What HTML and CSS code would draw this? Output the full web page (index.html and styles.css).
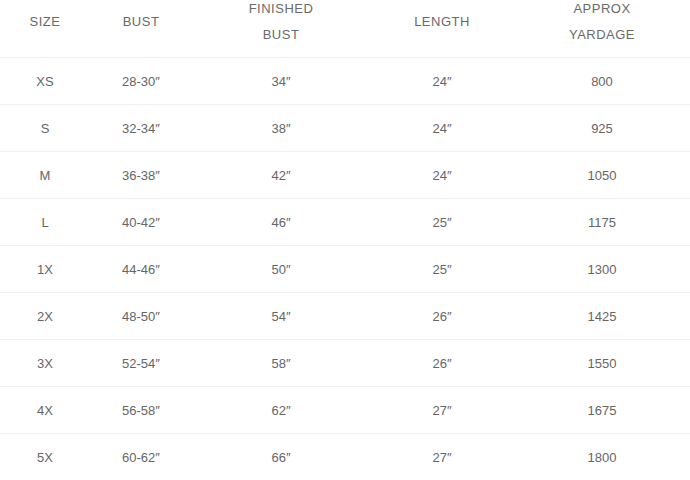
FILE: index.html
```html
<!DOCTYPE html>
<html>
<head>
<meta charset="utf-8">
<link rel="stylesheet" href="styles.css">
</head>
<body>
<table class="size-table">
  <colgroup>
    <col class="c1"><col class="c2"><col class="c3"><col class="c4"><col class="c5">
  </colgroup>
  <thead>
    <tr><th>SIZE</th><th>BUST</th><th>FINISHED<br>BUST</th><th>LENGTH</th><th>APPROX<br>YARDAGE</th></tr>
  </thead>
  <tbody>
    <tr><td>XS</td><td>28-30″</td><td>34″</td><td>24″</td><td>800</td></tr>
    <tr><td>S</td><td>32-34″</td><td>38″</td><td>24″</td><td>925</td></tr>
    <tr><td>M</td><td>36-38″</td><td>42″</td><td>24″</td><td>1050</td></tr>
    <tr><td>L</td><td>40-42″</td><td>46″</td><td>25″</td><td>1175</td></tr>
    <tr><td>1X</td><td>44-46″</td><td>50″</td><td>25″</td><td>1300</td></tr>
    <tr><td>2X</td><td>48-50″</td><td>54″</td><td>26″</td><td>1425</td></tr>
    <tr><td>3X</td><td>52-54″</td><td>58″</td><td>26″</td><td>1550</td></tr>
    <tr><td>4X</td><td>56-58″</td><td>62″</td><td>27″</td><td>1675</td></tr>
    <tr><td>5X</td><td>60-62″</td><td>66″</td><td>27″</td><td>1800</td></tr>
  </tbody>
</table>
</body>
</html>
```

FILE: styles.css
```css
html, body {
  margin: 0;
  padding: 0;
  background: #fff;
}
body {
  font-family: "Liberation Sans", Arial, sans-serif;
  font-size: 13px;
  color: #666;
  overflow: hidden;
}
.size-table {
  width: 690px;
  border-collapse: collapse;
  table-layout: fixed;
  margin-top: -14px;
}
.c1 { width: 90px; }
.c2 { width: 102px; }
.c3 { width: 178px; }
.c4 { width: 144px; }
.c5 { width: 176px; }
.size-table th {
  font-weight: normal;
  color: #6a6a6a;
  letter-spacing: 0.5px;
  line-height: 26px;
  padding: 10px 0 9px;
  text-align: center;
  vertical-align: middle;
  border-bottom: 1px solid #f0f0f0;
}
.size-table td {
  height: 44px;
  padding: 2px 0 0;
  text-align: center;
  vertical-align: middle;
  border-bottom: 1px solid #f0f0f0;
  line-height: 20px;
}
```
